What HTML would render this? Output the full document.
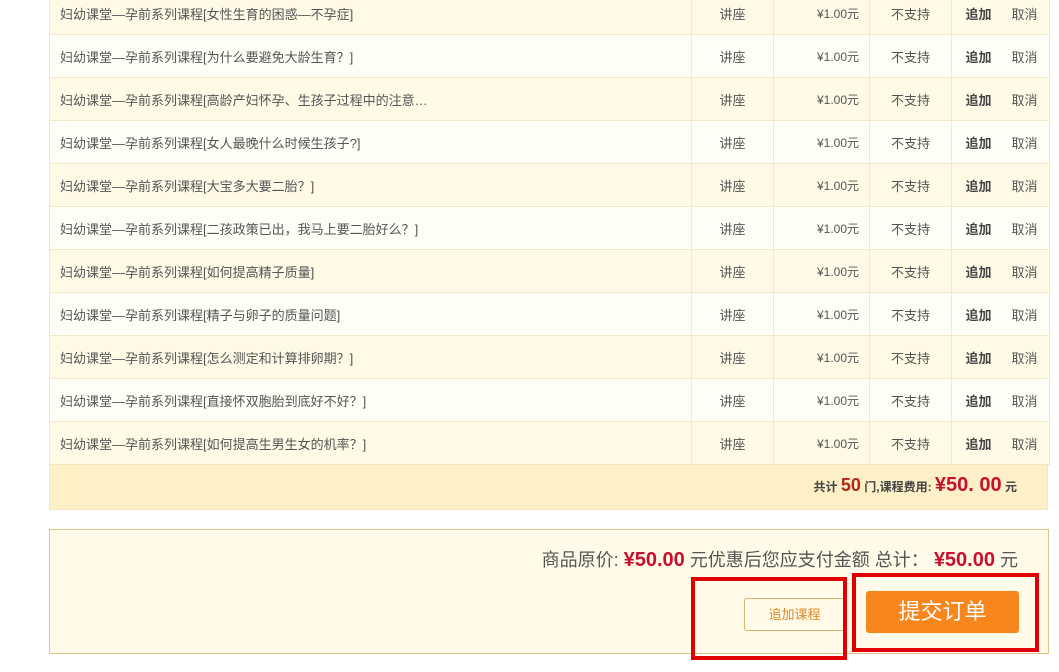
<!DOCTYPE html>
<html><head><meta charset="utf-8"><style>
body{margin:0;width:1059px;height:672px;background:#fff;position:relative;overflow:hidden;font-family:"Liberation Sans","Noto Sans CJK SC",sans-serif;}
table{position:absolute;left:49px;top:-9px;width:1000px;border-collapse:collapse;font-size:13px;color:#555;table-layout:fixed;}
td{height:42px;border:1px solid #f3e9c8;padding:0;text-align:center;white-space:nowrap;overflow:hidden;}
tr:nth-child(odd) td{background:#fffae6;}
tr:nth-child(even) td{background:#fffef6;}
td.n{text-align:left;padding-left:10px;}
td.p{font-size:12px;text-align:right;padding-right:10px}
td.a b{color:#444;display:inline-block;width:48px}
td.a span{display:inline-block;width:44px}
.sum{position:absolute;left:49px;top:464px;width:999px;height:46px;background:#fdf0c6;border:1px solid #f3e6c0;box-sizing:border-box;}
.sum span{position:absolute;right:30px;top:9px;font-size:12px;font-weight:bold;color:#444;}
.red{color:#c8102e;}
.box{position:absolute;left:49px;top:529px;width:1000px;height:125px;background:#fffbe8;border:1px solid #dcc48a;box-sizing:border-box;}
.tot{position:absolute;right:30px;top:16px;font-size:18px;color:#555;}
.tot b{font-size:20px}
.b1{position:absolute;left:694px;top:68px;width:101px;height:33px;border:1px solid #e0b070;border-radius:3px;box-sizing:border-box;color:#e08a2a;font-size:13px;text-align:center;line-height:31px;background:#fffbe8;}
.b2{position:absolute;left:816px;top:61px;width:153px;height:42px;background:#f7861d;border-radius:3px;color:#fff;font-size:22px;text-align:center;line-height:42px;}
.rb{position:absolute;border:4px solid #e00000;box-sizing:border-box;}
</style></head><body>
<table>
<colgroup><col style="width:642px"><col style="width:82px"><col style="width:96px"><col style="width:82px"><col style="width:98px"></colgroup>
<tr><td class="n">妇幼课堂—孕前系列课程[女性生育的困惑—不孕症]</td><td>讲座</td><td class="p">¥1.00元</td><td>不支持</td><td class="a"><b>追加</b><span>取消</span></td></tr>
<tr><td class="n">妇幼课堂—孕前系列课程[为什么要避免大龄生育？]</td><td>讲座</td><td class="p">¥1.00元</td><td>不支持</td><td class="a"><b>追加</b><span>取消</span></td></tr>
<tr><td class="n">妇幼课堂—孕前系列课程[高龄产妇怀孕、生孩子过程中的注意…</td><td>讲座</td><td class="p">¥1.00元</td><td>不支持</td><td class="a"><b>追加</b><span>取消</span></td></tr>
<tr><td class="n">妇幼课堂—孕前系列课程[女人最晚什么时候生孩子?]</td><td>讲座</td><td class="p">¥1.00元</td><td>不支持</td><td class="a"><b>追加</b><span>取消</span></td></tr>
<tr><td class="n">妇幼课堂—孕前系列课程[大宝多大要二胎？]</td><td>讲座</td><td class="p">¥1.00元</td><td>不支持</td><td class="a"><b>追加</b><span>取消</span></td></tr>
<tr><td class="n">妇幼课堂—孕前系列课程[二孩政策已出，我马上要二胎好么？]</td><td>讲座</td><td class="p">¥1.00元</td><td>不支持</td><td class="a"><b>追加</b><span>取消</span></td></tr>
<tr><td class="n">妇幼课堂—孕前系列课程[如何提高精子质量]</td><td>讲座</td><td class="p">¥1.00元</td><td>不支持</td><td class="a"><b>追加</b><span>取消</span></td></tr>
<tr><td class="n">妇幼课堂—孕前系列课程[精子与卵子的质量问题]</td><td>讲座</td><td class="p">¥1.00元</td><td>不支持</td><td class="a"><b>追加</b><span>取消</span></td></tr>
<tr><td class="n">妇幼课堂—孕前系列课程[怎么测定和计算排卵期？]</td><td>讲座</td><td class="p">¥1.00元</td><td>不支持</td><td class="a"><b>追加</b><span>取消</span></td></tr>
<tr><td class="n">妇幼课堂—孕前系列课程[直接怀双胞胎到底好不好？]</td><td>讲座</td><td class="p">¥1.00元</td><td>不支持</td><td class="a"><b>追加</b><span>取消</span></td></tr>
<tr><td class="n">妇幼课堂—孕前系列课程[如何提高生男生女的机率？]</td><td>讲座</td><td class="p">¥1.00元</td><td>不支持</td><td class="a"><b>追加</b><span>取消</span></td></tr>
</table>
<div class="sum"><span>共计 <b style="font-size:18px;color:#b5261a">50</b> 门,课程费用: <b class="red" style="font-size:20px">¥50. 00</b> 元</span></div>
<div class="box">
<div class="tot">商品原价: <b class="red">¥50.00</b> 元优惠后您应支付金额 总计： <b class="red">¥50.00</b> 元</div>
<div class="b1">追加课程</div>
<div class="b2">提交订单</div>
</div>
<div class="rb" style="left:691px;top:577px;width:156px;height:83px"></div>
<div class="rb" style="left:852px;top:573px;width:187px;height:79px"></div>
</body></html>
